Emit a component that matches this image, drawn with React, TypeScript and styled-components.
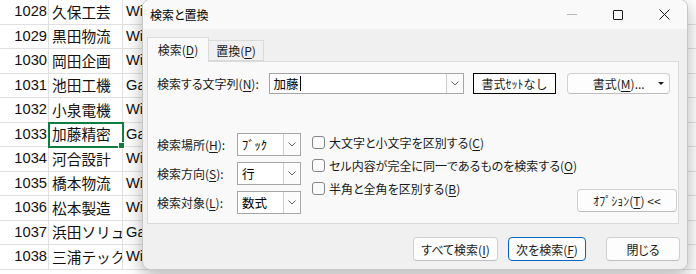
import styled, { createGlobalStyle } from "styled-components";

const GlobalStyle = createGlobalStyle`
  html, body {
    margin: 0;
    padding: 0;
    background: #fff;
    overflow: hidden;
  }
  body {
    font-family: "Noto Sans CJK JP", "Noto Sans", sans-serif;
  }
`;

const rows = [
  { id: 1028, name: "久保工芸", c: "Widget" },
  { id: 1029, name: "黒田物流", c: "Widget" },
  { id: 1030, name: "岡田企画", c: "Widget" },
  { id: 1031, name: "池田工機", c: "Gadget" },
  { id: 1032, name: "小泉電機", c: "Widget" },
  { id: 1033, name: "加藤精密", c: "Gadget" },
  { id: 1034, name: "河合設計", c: "Widget" },
  { id: 1035, name: "橋本物流", c: "Widget" },
  { id: 1036, name: "松本製造", c: "Widget" },
  { id: 1037, name: "浜田ソリュ", c: "Gadget" },
  { id: 1038, name: "三浦テック", c: "Widget" },
];

const extraCols = 8;

function Chevron() {
  return (
    <svg width="8" height="5" viewBox="0 0 8 5">
      <path d="M0.5 0.5 L4 4 L7.5 0.5" fill="none" stroke="#666" strokeWidth="1" />
    </svg>
  );
}

function Combo({ value, width, height, caret }: { value: string; width: number; height: number; caret?: boolean }) {
  return (
    <ComboBox $w={width} $h={height}>
      <ComboText>
        {value}
        {caret && <Caret />}
      </ComboText>
      <ComboArrow>
        <Chevron />
      </ComboArrow>
    </ComboBox>
  );
}

function Check({ children }: { children: React.ReactNode }) {
  return (
    <CheckRow>
      <CheckBox />
      <span>{children}</span>
    </CheckRow>
  );
}

export default function App() {
  return (
    <Page>
      <GlobalStyle />
      <Sheet>
        {rows.map((r) => (
          <SheetRow key={r.id}>
            <Cell $align="right">{r.id}</Cell>
            <Cell $selected={r.id === 1033}>{r.name}</Cell>
            <Cell>{r.c}</Cell>
            {Array.from({ length: extraCols }).map((_, i) => (
              <Cell key={i} />
            ))}
          </SheetRow>
        ))}
      </Sheet>

      <Dialog>
        <TitleBar>
          <Title>検索と置換</Title>
          <Controls>
            <ControlButton>
              <MinLine />
            </ControlButton>
            <ControlButton>
              <MaxBox />
            </ControlButton>
            <ControlButton>
              <svg width="11" height="11" viewBox="0 0 11 11">
                <path d="M0.5 0.5 L10.5 10.5 M10.5 0.5 L0.5 10.5" stroke="#1a1a1a" strokeWidth="1" />
              </svg>
            </ControlButton>
          </Controls>
        </TitleBar>

        <Body>
          <Tabs>
            <Tab $active>
              検索(<u>D</u>)
            </Tab>
            <Tab>
              置換(<u>P</u>)
            </Tab>
          </Tabs>

          <Panel>
            <FindRow>
              <FindLabel>
                検索する文字列(<u>N</u>):
              </FindLabel>
              <Combo value="加藤" width={196} height={21} caret />
              <NoFormatButton>書式ｾｯﾄなし</NoFormatButton>
              <FormatButton>
                書式(<u>M</u>)...
                <DropTriangle />
              </FormatButton>
            </FindRow>

            <Lower>
              <SelectGrid>
                <FieldLabel>
                  検索場所(<u>H</u>):
                </FieldLabel>
                <Combo value="ﾌﾞｯｸ" width={64} height={23} />
                <FieldLabel>
                  検索方向(<u>S</u>):
                </FieldLabel>
                <Combo value="行" width={64} height={23} />
                <FieldLabel>
                  検索対象(<u>L</u>):
                </FieldLabel>
                <Combo value="数式" width={64} height={23} />
              </SelectGrid>

              <CheckList>
                <Check>
                  大文字と小文字を区別する(<u>C</u>)
                </Check>
                <Check>
                  セル内容が完全に同一であるものを検索する(<u>O</u>)
                </Check>
                <Check>
                  半角と全角を区別する(<u>B</u>)
                </Check>
              </CheckList>

              <OptionsButton>
                ｵﾌﾟｼｮﾝ(<u>T</u>) &lt;&lt;
              </OptionsButton>
            </Lower>
          </Panel>

          <Footer>
            <Button $w={85}>
              すべて検索(<u>I</u>)
            </Button>
            <Button $w={78} $primary>
              次を検索(<u>F</u>)
            </Button>
            <Button $w={74} $gap={20}>
              閉じる
            </Button>
          </Footer>
        </Body>
      </Dialog>
    </Page>
  );
}

const Page = styled.div`
  position: relative;
  width: 696px;
  height: 274px;
  overflow: hidden;
  background: #fff;
`;

const Sheet = styled.div`
  display: flex;
  flex-direction: column;
  font-family: "Liberation Sans", "Noto Sans CJK JP", sans-serif;
  font-size: 14.7px;
  color: #111;
`;

const SheetRow = styled.div`
  display: grid;
  grid-template-columns: 49px 74px 70px repeat(${extraCols}, 72.5px);
  height: 24.5px;
`;

const Cell = styled.div<{ $align?: "left" | "right"; $selected?: boolean }>`
  position: relative;
  display: flex;
  align-items: center;
  justify-content: ${(p) => (p.$align === "right" ? "flex-end" : "flex-start")};
  padding: 0 1px 1px 3px;
  border-right: 1px solid #e1e1e1;
  border-bottom: 1px solid #e1e1e1;
  white-space: nowrap;
  overflow: ${(p) => (p.$selected ? "visible" : "hidden")};
  ${(p) =>
    p.$selected &&
    `
    outline: 2px solid #107c41;
    outline-offset: -1px;
    z-index: 1;
    &::after {
      content: "";
      position: absolute;
      right: -3px;
      bottom: -3px;
      width: 5px;
      height: 5px;
      background: #107c41;
      border: 1px solid #fff;
    }
  `}
`;

const Dialog = styled.div`
  position: absolute;
  left: 142px;
  top: -1px;
  width: 546px;
  height: 271px;
  box-sizing: border-box;
  display: flex;
  flex-direction: column;
  background: #f0f0f0;
  border: 1px solid #c8c8c8;
  border-radius: 8px;
  box-shadow: 0 6px 18px rgba(0, 0, 0, 0.3);
  overflow: hidden;
  font-family: "Noto Sans CJK JP", sans-serif;
  font-feature-settings: "palt";
  font-size: 12px;
  color: #1a1a1a;

  u {
    text-decoration-thickness: 1px;
    text-underline-offset: 2px;
  }
`;

const TitleBar = styled.div`
  display: flex;
  align-items: center;
  height: 29px;
  padding-left: 7px;
  background: #f9f9f9;
`;

const Title = styled.div`
  flex: 1;
  font-size: 12px;
  color: #000;
`;

const Controls = styled.div`
  display: flex;
  height: 100%;
`;

const ControlButton = styled.div`
  width: 46px;
  height: 100%;
  display: flex;
  align-items: center;
  justify-content: center;
`;

const MinLine = styled.div`
  width: 10px;
  height: 1px;
  background: #b8b8b8;
`;

const MaxBox = styled.div`
  width: 8px;
  height: 8px;
  border: 1px solid #1a1a1a;
  border-radius: 1px;
`;

const Body = styled.div`
  flex: 1;
  display: flex;
  flex-direction: column;
  padding: 8px 7px 0 4px;
`;

const Tabs = styled.div`
  display: flex;
  align-items: flex-end;
  height: 24px;
`;

const Tab = styled.div<{ $active?: boolean }>`
  position: relative;
  box-sizing: border-box;
  display: flex;
  align-items: center;
  justify-content: center;
  width: ${(p) => (p.$active ? 62 : 55)}px;
  height: ${(p) => (p.$active ? 25 : 21)}px;
  margin-bottom: ${(p) => (p.$active ? -1 : 0)}px;
  padding-bottom: ${(p) => (p.$active ? 2 : 0)}px;
  border: 1px solid #dadada;
  border-bottom: ${(p) => (p.$active ? "none" : "1px solid #dadada")};
  border-left: ${(p) => (p.$active ? "1px solid #dadada" : "none")};
  background: ${(p) => (p.$active ? "#f9f9f9" : "#f0f0f0")};
  z-index: ${(p) => (p.$active ? 1 : 0)};
`;

const Panel = styled.div`
  box-sizing: border-box;
  height: 163px;
  margin-right: 1px;
  padding: 11px 8px 0 9px;
  background: #f9f9f9;
  border: 1px solid #dadada;
  display: flex;
  flex-direction: column;
`;

const FindRow = styled.div`
  display: flex;
  align-items: center;
  height: 21px;
`;

const FindLabel = styled.div`
  width: 112px;
`;

const ComboBox = styled.div<{ $w: number; $h: number }>`
  box-sizing: border-box;
  display: flex;
  width: ${(p) => p.$w}px;
  height: ${(p) => p.$h}px;
  background: #fff;
  border: 1px solid #a6a6a6;
`;

const ComboText = styled.div`
  flex: 1;
  display: flex;
  align-items: center;
  padding-left: 4px;
  font-size: 12.5px;
  font-feature-settings: normal;
  color: #000;
`;

const Caret = styled.span`
  display: inline-block;
  width: 1px;
  height: 15px;
  margin-left: 1px;
  background: #000;
`;

const ComboArrow = styled.div`
  box-sizing: border-box;
  width: 17px;
  display: flex;
  align-items: center;
  justify-content: center;
  background: #fbfbfb;
  border-left: 1px solid #cfcfcf;
`;

const NoFormatButton = styled.div`
  box-sizing: border-box;
  width: 84px;
  height: 21px;
  margin-left: 9px;
  display: flex;
  align-items: center;
  justify-content: center;
  background: #fff;
  border: 1px solid #000;
  font-feature-settings: normal;
`;

const FormatButton = styled.div`
  position: relative;
  box-sizing: border-box;
  width: 103px;
  height: 21px;
  margin-left: 11px;
  display: flex;
  align-items: center;
  justify-content: center;
  background: #fdfdfd;
  border: 1px solid #d0d0d0;
  border-bottom-color: #bdbdbd;
  border-radius: 4px;
`;

const DropTriangle = styled.span`
  position: absolute;
  right: 5px;
  top: 8px;
  width: 0;
  height: 0;
  border-left: 3px solid transparent;
  border-right: 3px solid transparent;
  border-top: 3px solid #1a1a1a;
`;

const Lower = styled.div`
  display: flex;
  margin-top: 39px;
`;

const SelectGrid = styled.div`
  display: grid;
  flex-shrink: 0;
  grid-template-columns: 80px 64px;
  grid-auto-rows: 23px;
  row-gap: 6px;
  align-items: center;
`;

const FieldLabel = styled.div`
  padding-bottom: 1px;
`;

const CheckList = styled.div`
  display: flex;
  flex-direction: column;
  flex-shrink: 0;
  margin: -2px 0 0 11px;
`;

const CheckRow = styled.div`
  display: flex;
  align-items: center;
  gap: 4px;
  height: 23px;
  white-space: nowrap;
`;

const CheckBox = styled.span`
  box-sizing: border-box;
  flex-shrink: 0;
  width: 13px;
  height: 13px;
  border: 1px solid #858585;
  border-radius: 3px;
  background: #fbfbfb;
`;

const OptionsButton = styled.div`
  box-sizing: border-box;
  flex-shrink: 0;
  align-self: flex-end;
  width: 100px;
  height: 23px;
  margin: 0 1px 2px auto;
  display: flex;
  align-items: center;
  justify-content: center;
  background: #fdfdfd;
  border: 1px solid #d0d0d0;
  border-bottom-color: #bdbdbd;
  border-radius: 4px;
  white-space: pre;
  font-feature-settings: normal;
`;

const Footer = styled.div`
  display: flex;
  justify-content: flex-end;
  margin-top: 13px;
`;

const Button = styled.div<{ $w: number; $primary?: boolean; $gap?: number }>`
  box-sizing: border-box;
  width: ${(p) => p.$w}px;
  height: 24px;
  margin-left: ${(p) => p.$gap ?? 10}px;
  display: flex;
  align-items: center;
  justify-content: center;
  background: #fdfdfd;
  border: 1px solid ${(p) => (p.$primary ? "#0067c0" : "#d0d0d0")};
  border-bottom-color: ${(p) => (p.$primary ? "#0067c0" : "#bdbdbd")};
  border-radius: 4px;
`;
